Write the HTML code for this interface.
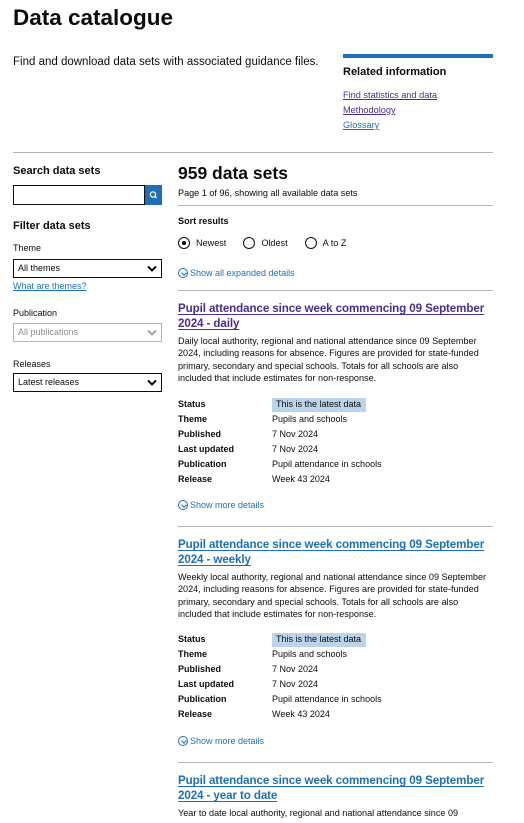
<!DOCTYPE html>
<html><head><meta charset="utf-8">
<style>
*{margin:0;padding:0;box-sizing:border-box}
body{width:524px;height:823px;overflow:hidden;background:#fff;font-family:"Liberation Sans",sans-serif;color:#0b0c0c;position:relative}
.a{position:absolute;white-space:nowrap}
.rule{position:absolute;height:1px;background:#b1b4b6}
.lnk{color:#1d70b8;text-decoration:underline}
.vis{color:#4c2c92;text-decoration:underline}
.t{font-size:11.6px;font-weight:bold;line-height:15px;letter-spacing:-0.1px;text-decoration-thickness:1px;text-underline-offset:2px}
.d{font-size:9.1px;line-height:12.3px}
.dl{font-size:9px;line-height:15px}
.dl b{position:absolute;left:0}
.dl span{position:absolute;left:94px}
.sel{position:absolute;left:13px;width:149px;height:19px;border:1.5px solid #0b0c0c;font-size:9px;line-height:16px;padding-left:4px}
.sel svg{position:absolute;right:4px;top:5px}
.sm{font-size:9px;color:#1d70b8;line-height:12px}
.circ{display:inline-block;width:10px;height:10px;border:1px solid #1d70b8;border-radius:50%;vertical-align:-2px;margin-right:2px;position:relative}
.circ:after{content:"";position:absolute;left:2.5px;top:1.5px;width:3px;height:3px;border-right:1px solid #1d70b8;border-bottom:1px solid #1d70b8;transform:rotate(45deg)}
.rad{display:inline-block;width:12px;height:12px;border:1.3px solid #0b0c0c;border-radius:50%;vertical-align:-3px;margin-right:6px;position:relative}
</style></head><body>
<div class="a" style="left:13px;top:3px;font-size:22.5px;font-weight:bold;line-height:30px">Data catalogue</div>
<div class="a" style="left:13px;top:55px;font-size:11.5px;line-height:14px">Find and download data sets with associated guidance files.</div>
<div style="position:absolute;left:343px;top:54px;width:150px;height:4px;background:#1d70b8"></div>
<div class="a" style="left:343px;top:65px;font-size:11px;font-weight:bold;line-height:14px">Related information</div>
<div class="a vis" style="left:343px;top:89px;font-size:9.2px;line-height:12px">Find statistics and data</div>
<div class="a vis" style="left:343px;top:104px;font-size:9.2px;line-height:12px">Methodology</div>
<div class="a lnk" style="left:343px;top:119px;font-size:9.2px;line-height:12px">Glossary</div>
<div class="rule" style="left:13px;top:152px;width:480px"></div>

<div class="a" style="left:13px;top:164px;font-size:11px;font-weight:bold;line-height:14px">Search data sets</div>
<div style="position:absolute;left:13px;top:185px;width:132px;height:20px;border:1.5px solid #0b0c0c"></div>
<div style="position:absolute;left:145px;top:185px;width:17px;height:20px;background:#1d70b8">
<svg width="17" height="20" viewBox="0 0 17 20"><circle cx="8" cy="9.5" r="2.6" fill="none" stroke="#fff" stroke-width="1.3"/><line x1="9.9" y1="11.4" x2="11.5" y2="13" stroke="#fff" stroke-width="1.4"/></svg></div>
<div class="a" style="left:13px;top:219px;font-size:11px;font-weight:bold;line-height:14px">Filter data sets</div>
<div class="a" style="left:13px;top:242px;font-size:9px;line-height:12px">Theme</div>
<div class="sel" style="top:259px">All themes<svg width="10" height="7" viewBox="0 0 10 7"><path d="M1 1.5 L5 5.5 L9 1.5" fill="none" stroke="#0b0c0c" stroke-width="2"/></svg></div>
<div class="a lnk" style="left:13px;top:280px;font-size:9px;line-height:12px">What are themes?</div>
<div class="a" style="left:13px;top:307px;font-size:9px;line-height:12px">Publication</div>
<div class="sel" style="top:323px;border-color:#b1b4b6;color:#8a8c8e">All publications<svg width="10" height="7" viewBox="0 0 10 7"><path d="M1 1.5 L5 5.5 L9 1.5" fill="none" stroke="#a0a2a4" stroke-width="2"/></svg></div>
<div class="a" style="left:13px;top:358px;font-size:9px;line-height:12px">Releases</div>
<div class="sel" style="top:373px">Latest releases<svg width="10" height="7" viewBox="0 0 10 7"><path d="M1 1.5 L5 5.5 L9 1.5" fill="none" stroke="#0b0c0c" stroke-width="2"/></svg></div>

<div class="a" style="left:178px;top:162px;font-size:17.5px;font-weight:bold;line-height:22px">959 data sets</div>
<div class="a" style="left:178px;top:187px;font-size:9.1px;line-height:12px">Page 1 of 96, showing all available data sets</div>
<div class="rule" style="left:178px;top:205px;width:315px"></div>
<div class="a" style="left:178px;top:215px;font-size:9.1px;font-weight:bold;line-height:12px">Sort results</div>
<div class="a" style="left:178px;top:237px;font-size:9.1px;line-height:13px"><span class="rad"><span style="position:absolute;left:3px;top:3px;width:3.5px;height:3.5px;background:#0b0c0c;border-radius:50%"></span></span>Newest<span style="display:inline-block;width:17px"></span><span class="rad"></span>Oldest<span style="display:inline-block;width:17px"></span><span class="rad"></span>A to Z</div>
<div class="a sm" style="left:178px;top:267px"><span class="circ"></span>Show all expanded details</div>
<div class="rule" style="left:178px;top:290px;width:315px"></div>

<div class="a t vis" style="left:178px;top:301px">Pupil attendance since week commencing 09 September<br>2024 - daily</div>
<div class="a d" style="left:178px;top:335px">Daily local authority, regional and national attendance since 09 September<br>2024, including reasons for absence. Figures are provided for state-funded<br>primary, secondary and special schools. Totals for all schools are also<br>included that include estimates for non-response.</div>
<div style="position:absolute;left:272px;top:398px;width:94px;height:14px;background:#bbd4ea"></div>
<div class="a dl" style="left:178px;top:397px;width:300px"><b>Status</b><span style="left:98px">This is the latest data</span><br><b style="top:15px">Theme</b><span style="top:15px">Pupils and schools</span><b style="top:30px">Published</b><span style="top:30px">7 Nov 2024</span><b style="top:45px">Last updated</b><span style="top:45px">7 Nov 2024</span><b style="top:60px">Publication</b><span style="top:60px">Pupil attendance in schools</span><b style="top:75px">Release</b><span style="top:75px">Week 43 2024</span></div>
<div class="a sm" style="left:178px;top:499px"><span class="circ"></span>Show more details</div>
<div class="rule" style="left:178px;top:526px;width:315px"></div>

<div class="a t lnk" style="left:178px;top:537px">Pupil attendance since week commencing 09 September<br>2024 - weekly</div>
<div class="a d" style="left:178px;top:571px">Weekly local authority, regional and national attendance since 09 September<br>2024, including reasons for absence. Figures are provided for state-funded<br>primary, secondary and special schools. Totals for all schools are also<br>included that include estimates for non-response.</div>
<div style="position:absolute;left:272px;top:633px;width:94px;height:14px;background:#bbd4ea"></div>
<div class="a dl" style="left:178px;top:632px;width:300px"><b>Status</b><span style="left:98px">This is the latest data</span><br><b style="top:15px">Theme</b><span style="top:15px">Pupils and schools</span><b style="top:30px">Published</b><span style="top:30px">7 Nov 2024</span><b style="top:45px">Last updated</b><span style="top:45px">7 Nov 2024</span><b style="top:60px">Publication</b><span style="top:60px">Pupil attendance in schools</span><b style="top:75px">Release</b><span style="top:75px">Week 43 2024</span></div>
<div class="a sm" style="left:178px;top:735px"><span class="circ"></span>Show more details</div>
<div class="rule" style="left:178px;top:762px;width:315px"></div>

<div class="a t lnk" style="left:178px;top:773px">Pupil attendance since week commencing 09 September<br>2024 - year to date</div>
<div class="a d" style="left:178px;top:807px">Year to date local authority, regional and national attendance since 09</div>
</body></html>
